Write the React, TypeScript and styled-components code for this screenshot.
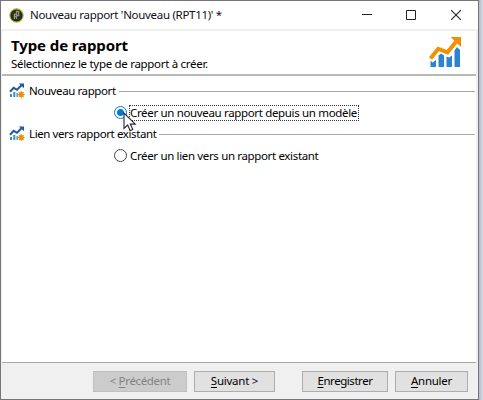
import React from "react";
import styled, { createGlobalStyle } from "styled-components";

const GlobalStyle = createGlobalStyle`
  * { box-sizing: border-box; }
  body { margin: 0; background: #c9ccd6; overflow: hidden; }
`;

const Desktop = styled.div`
  width: 483px;
  height: 400px;
  background: linear-gradient(to right, #a9abb3 478px, #c0c4ce 480px, #d3d7e1 483px);
  font: 11.5px/16px "Noto Sans", "Open Sans", sans-serif;
  color: #000;
`;

const Window = styled.div`
  width: 479px;
  height: 400px;
  display: flex;
  flex-direction: column;
  background: #f0f0f0;
  border: 1px solid #77757b;
`;

const Text = styled.span<{ $spacing?: number }>`
  white-space: nowrap;
  letter-spacing: ${(p) => p.$spacing ?? 0}px;
`;

const TitleBar = styled.header`
  height: 28px;
  flex: none;
  display: flex;
  align-items: center;
  padding-left: 8px;
  background: #fff;
`;

const WindowTitle = styled(Text)`
  flex: 1;
  margin-left: 6px;
  color: #101018;
`;

const Caption = styled.div`
  display: flex;
`;

const CaptionButton = styled.button`
  width: 44.5px;
  height: 26px;
  padding: 0;
  border: 0;
  background: none;
  display: grid;
  place-items: center;
`;

const Content = styled.main`
  flex: 1;
  display: flex;
  flex-direction: column;
  margin: 2px 2px 0 1px;
  background: #fff;
`;

const Banner = styled.section`
  height: 45px;
  flex: none;
  display: flex;
  justify-content: space-between;
  padding: 5px 14px 0 9px;
  border-bottom: 2px solid #b8b8b8;
`;

const BannerText = styled.div`
  display: flex;
  flex-direction: column;
`;

const Heading = styled.h1`
  margin: 0;
  font-size: 15px;
  line-height: 18px;
  font-weight: 700;
  letter-spacing: -0.1px;
  color: #000;
  white-space: nowrap;
`;

const Subtitle = styled(Text)`
  margin-top: 2px;
`;

const Form = styled.div`
  flex: 1;
  padding: 7px 0 0 7px;
`;

const Group = styled.section`
  height: 43px;
`;

const GroupHeader = styled.div`
  height: 16px;
  display: flex;
  align-items: center;
`;

const GroupName = styled(Text)`
  margin: 0 3px 0 3px;
`;

const Rule = styled.div`
  flex: 1;
  height: 1px;
  margin: 0 1px 0 0;
  background: #a8a8a8;
`;

const Option = styled.label`
  display: flex;
  align-items: center;
  width: max-content;
  margin: 6px 0 0 105px;
  height: 16px;
`;

const Radio = styled.span<{ $checked?: boolean }>`
  width: 13px;
  height: 13px;
  margin-top: -1px;
  border-radius: 50%;
  border: 1px solid ${(p) => (p.$checked ? "#0078d7" : "#444")};
  background: ${(p) => (p.$checked ? "radial-gradient(circle, #0078d7 3px, #fff 4px)" : "#fff")};
`;

const OptionText = styled(Text)<{ $focused?: boolean }>`
  margin-left: 2px;
  padding: 0 2px 0 1px;
  outline: ${(p) => (p.$focused ? "1px dotted #333" : "none")};
  outline-offset: -1px;
`;

const Footer = styled.footer`
  height: 37px;
  flex: none;
  display: flex;
  align-items: center;
  justify-content: flex-end;
  gap: 7px;
  padding: 0 8px 0 0;
  margin: 0 2px 0 1px;
  border-top: 1px solid #a8a8a8;
`;

const Button = styled.button<{ $width: number; $gapBefore?: number }>`
  width: ${(p) => p.$width}px;
  height: 21px;
  margin-left: ${(p) => p.$gapBefore ?? 0}px;
  padding: 0;
  border: 1px solid #adadad;
  background: #e1e1e1;
  color: #000;
  font: inherit;
  line-height: 18px;
  &:disabled {
    background: #ccc;
    border-color: #bfbfbf;
    color: #838383;
  }
`;

const Mnemonic = styled.span`
  text-decoration: underline;
  text-underline-offset: 2px;
`;

const Pointer = styled.svg`
  position: absolute;
  left: 123px;
  top: 112px;
`;

const AppIcon = () => (
  <svg width="15" height="15" viewBox="0 0 15 15">
    <circle cx="7.5" cy="7.5" r="6.6" fill="#292b25" stroke="#a5ad24" strokeWidth="1.1" />
    <path d="M5.4 11V6.2h2M7.5 11V3.5h2.2v4H7.5M4.6 8.5h3" fill="none" stroke="#92947f" strokeWidth="1.3" />
  </svg>
);

const ReportIcon = () => (
  <svg width="34" height="32" viewBox="0 0 34 32">
    <path
      d="M2.500 24.500l2 2 3.500-2.500v7H2.500zM10.500 19.500l2.500-2 3 2v11.500h-5.500zM18.500 20.500l2.500 1 3-2v11.500h-5.500zM26.500 14.500l2.500-3.500 3 3v17h-5.500z"
      fill="#2b83d2"
    />
    <path d="M2.500 22.500l7.800-9.700 9.200 3.500 8.500-10.500" fill="none" stroke="#f19100" strokeWidth="4" />
    <path d="M22.500 1H33v10z" fill="#f19100" />
  </svg>
);

const GroupIcon = () => (
  <svg width="17" height="16" viewBox="0 0 17 16">
    <path d="M1 11h2v3H1zM4.300 9h2v5h-2zM7.500 10h1.300v4H7.500z" fill="#368bd2" />
    <path d="M1 8.800l3.700-4 3.300 2 4.500-4.500" fill="none" stroke="#1d5ba5" strokeWidth="2" />
    <path d="M9.800 0.500H15v4.800z" fill="#1d5ba5" />
    <circle cx="12.200" cy="11.500" r="2.600" fill="#ef910c" />
    <path
      d="M12.200 8v7M8.700 11.500h7M9.800 9.100l4.800 4.800M14.600 9.100l-4.800 4.800"
      stroke="#ef910c"
      strokeWidth="1.100"
    />
  </svg>
);

const groups = [
  {
    name: "Nouveau rapport",
    nameSpacing: -0.4,
    option: "Créer un nouveau rapport depuis un modèle",
    optionSpacing: -0.34,
    checked: true,
  },
  {
    name: "Lien vers rapport existant",
    nameSpacing: -0.4,
    option: "Créer un lien vers un rapport existant",
    optionSpacing: -0.35,
    checked: false,
  },
];

export default function App() {
  return (
    <Desktop>
      <GlobalStyle />
      <Window>
        <TitleBar>
          <AppIcon />
          <WindowTitle $spacing={-0.3}>Nouveau rapport 'Nouveau (RPT11)' *</WindowTitle>
          <Caption>
            <CaptionButton aria-label="Réduire">
              <svg width="10" height="10"><path d="M0 4.500h10" stroke="#222" /></svg>
            </CaptionButton>
            <CaptionButton aria-label="Agrandir">
              <svg width="10" height="10"><path d="M.5.500h9v9h-9z" fill="none" stroke="#222" /></svg>
            </CaptionButton>
            <CaptionButton aria-label="Fermer">
              <svg width="10" height="10"><path d="M0 0l10 10M10 0L0 10" stroke="#222" strokeWidth="1.100" /></svg>
            </CaptionButton>
          </Caption>
        </TitleBar>
        <Content>
          <Banner>
            <BannerText>
              <Heading>Type de rapport</Heading>
              <Subtitle $spacing={-0.3}>Sélectionnez le type de rapport à créer.</Subtitle>
            </BannerText>
            <ReportIcon />
          </Banner>
          <Form>
            {groups.map((g) => (
              <Group key={g.name}>
                <GroupHeader>
                  <GroupIcon />
                  <GroupName $spacing={g.nameSpacing}>{g.name}</GroupName>
                  <Rule />
                </GroupHeader>
                <Option>
                  <Radio $checked={g.checked} />
                  <OptionText $focused={g.checked} $spacing={g.optionSpacing}>{g.option}</OptionText>
                </Option>
              </Group>
            ))}
          </Form>
        </Content>
        <Footer>
          <Button disabled $width={94}>
            <Text $spacing={-0.35}>&lt; <Mnemonic>P</Mnemonic>récédent</Text>
          </Button>
          <Button $width={81}>
            <Text $spacing={-0.25}><Mnemonic>S</Mnemonic>uivant &gt;</Text>
          </Button>
          <Button $width={86} $gapBefore={20}>
            <Text $spacing={-0.45}><Mnemonic>E</Mnemonic>nregistrer</Text>
          </Button>
          <Button $width={73}>
            <Text $spacing={-0.25}><Mnemonic>A</Mnemonic>nnuler</Text>
          </Button>
        </Footer>
      </Window>
      <Pointer width="14" height="20" viewBox="0 0 14 20">
        <path d="M1 1v15.500l3.700-3.500 2.500 5.700 2.600-1.200-2.500-5.400h5z" fill="#fff" stroke="#29292f" strokeWidth="1.100" />
      </Pointer>
    </Desktop>
  );
}
